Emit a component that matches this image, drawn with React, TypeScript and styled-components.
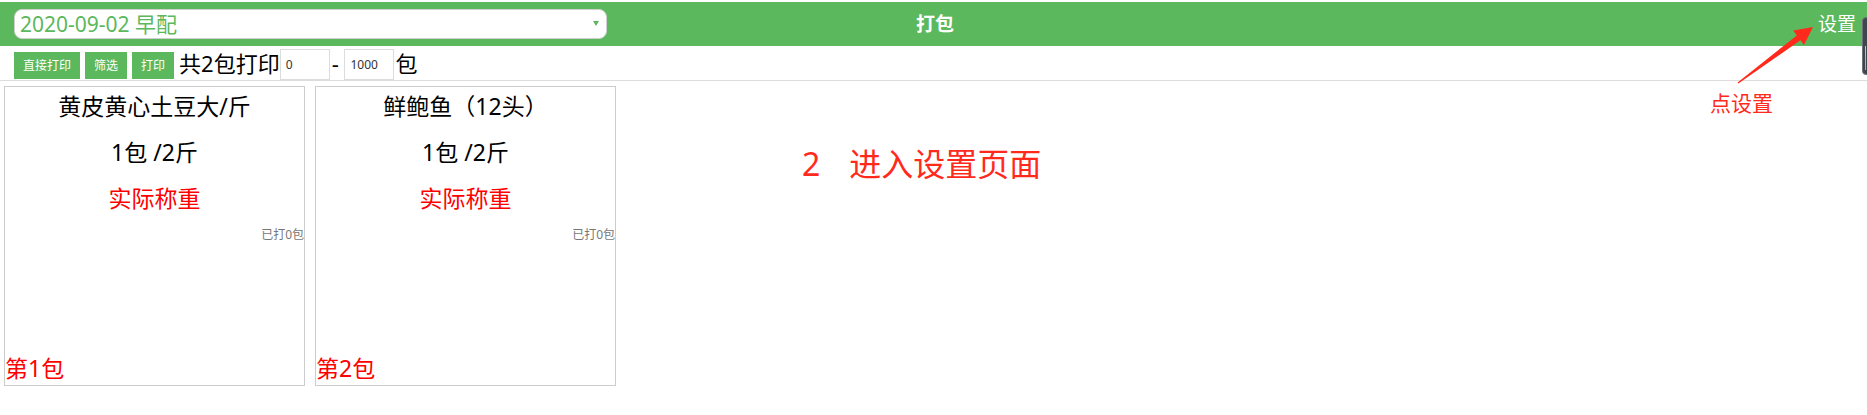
import React from "react";
import styled, { createGlobalStyle } from "styled-components";

const GREEN = "#5cb85c";
const FONT = `"Noto Sans", "Noto Sans CJK SC", sans-serif`;

const GlobalStyle = createGlobalStyle`
  html, body { margin: 0; padding: 0; background: #fff; overflow: hidden; }
  body { font-family: ${FONT}; color: #000; }
  * { box-sizing: border-box; }
`;

const Page = styled.div`
  position: relative;
  width: 1867px;
  height: 415px;
  padding-top: 2px;
`;

const Header = styled.header`
  height: 44px;
  background: ${GREEN};
  display: grid;
  grid-template-columns: 1fr auto 1fr;
  align-items: center;
  padding: 0 11px 0 14px;
`;

const Select = styled.div`
  width: 593px;
  height: 30px;
  background: #fff;
  border: 1px solid #cfcfcf;
  border-radius: 8px;
  display: flex;
  align-items: center;
  justify-content: space-between;
  padding: 0 7px 0 5px;
  color: ${GREEN};
  font-size: 21px;
  line-height: 28px;
`;

const Caret = styled.span`
  width: 0;
  height: 0;
  border-left: 3px solid transparent;
  border-right: 3px solid transparent;
  border-top: 5px solid ${GREEN};
  margin-top: -2px;
`;

const Title = styled.div`
  color: #fff;
  font-weight: bold;
  font-size: 19px;
  line-height: 24px;
`;

const HeaderLink = styled.div`
  justify-self: end;
  color: #fff;
  font-size: 19px;
  line-height: 24px;
`;

const Toolbar = styled.div`
  height: 35px;
  display: flex;
  align-items: flex-end;
  padding: 0 0 1px 14px;
  border-bottom: 1px solid #dcdcdc;
`;

const Button = styled.button`
  height: 27px;
  margin: 0 5px 0 0;
  padding: 0 9px;
  border: none;
  background: ${GREEN};
  color: #fff;
  font-family: ${FONT};
  font-size: 12px;
  line-height: 27px;
`;

const Label = styled.span<{ $ml?: number }>`
  font-size: 22px;
  line-height: 31px;
  margin-left: ${(p) => p.$ml ?? 0}px;
`;

const Input = styled.input`
  width: 50px;
  height: 31px;
  border: 1px solid #dcdcdc;
  padding: 0 5px;
  font-family: ${FONT};
  font-size: 12px;
  color: #333;
  outline: none;
  margin-bottom: -1px;
`;

const Cards = styled.div`
  display: flex;
  gap: 10px;
  padding: 5px 0 0 4px;
`;

const Card = styled.div`
  width: 301px;
  height: 300px;
  border: 1px solid #cccccc;
  display: flex;
  flex-direction: column;
  align-items: center;
  text-align: center;
`;

const CardLine = styled.div<{ $red?: boolean; $mt: number }>`
  font-size: 23px;
  line-height: 30px;
  margin-top: ${(p) => p.$mt}px;
  color: ${(p) => (p.$red ? "#ff0000" : "#000")};
`;

const Printed = styled.div`
  align-self: flex-end;
  font-size: 12px;
  line-height: 16px;
  color: #777;
  margin-top: 14px;
`;

const PackNo = styled.div`
  align-self: flex-start;
  margin-top: auto;
  margin-bottom: 2px;
  font-size: 23px;
  line-height: 30px;
  color: #ff0000;
`;

const Note = styled.div<{ $x: number; $y: number; $size: number }>`
  position: absolute;
  left: ${(p) => p.$x}px;
  top: ${(p) => p.$y}px;
  font-size: ${(p) => p.$size}px;
  line-height: 1;
  color: #ff2a1c;
  white-space: pre;
  display: flex;
`;

const NoteGap = styled.span`
  margin-left: 29px;
`;

const ArrowSvg = styled.svg`
  position: absolute;
  left: 0;
  top: 0;
  pointer-events: none;
`;

const Widget = styled.div`
  position: absolute;
  left: 1862px;
  top: 17px;
  width: 14px;
  height: 58px;
  background: #41464d;
  border: 1px solid #6d737a;
  border-radius: 4px;
  &::after {
    content: "";
    position: absolute;
    left: 2px;
    top: 28px;
    width: 1px;
    height: 24px;
    background: linear-gradient(#d8d25a, #4fd0c8);
  }
`;

const items = [
  { name: "黄皮黄心土豆大/斤", no: 1 },
  { name: "鲜鲍鱼（12头）", no: 2 },
];

export default function App() {
  return (
    <>
      <GlobalStyle />
      <Page>
        <Header>
          <Select>
            <span>2020-09-02 早配</span>
            <Caret />
          </Select>
          <Title>打包</Title>
          <HeaderLink>设置</HeaderLink>
        </Header>
        <Toolbar>
          <Button>直接打印</Button>
          <Button>筛选</Button>
          <Button>打印</Button>
          <Label>共2包打印</Label>
          <Input defaultValue="0" />
          <Label $ml={2}>-&nbsp;</Label>
          <Input defaultValue="1000" />
          <Label $ml={1}>包</Label>
        </Toolbar>
        <Cards>
          {items.map((it) => (
            <Card key={it.no}>
              <CardLine $mt={4}>{it.name}</CardLine>
              <CardLine $mt={16}>1包 /2斤</CardLine>
              <CardLine $mt={16} $red>
                实际称重
              </CardLine>
              <Printed>已打0包</Printed>
              <PackNo>第{it.no}包</PackNo>
            </Card>
          ))}
        </Cards>
        <Note $x={802} $y={148} $size={32}>
          <span>2</span>
          <NoteGap>进入设置页面</NoteGap>
        </Note>
        <Note $x={1710} $y={93} $size={21}>点设置</Note>
        <ArrowSvg width="1867" height="415" viewBox="0 0 1867 415">
          <polygon
            points="1737.6,82.4 1796.8,35.4 1793.2,30.6 1813,27 1804.0,45.0 1800.4,40.2 1738.4,83.6"
            fill="#ff2a1c"
          />
        </ArrowSvg>
        <Widget />
      </Page>
    </>
  );
}
